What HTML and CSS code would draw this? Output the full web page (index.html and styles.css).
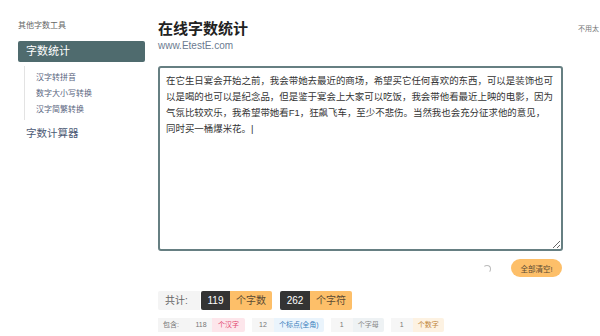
FILE: index.html
```html
<!DOCTYPE html>
<html>
<head>
    <meta charset="utf-8">
    <title>在线字数统计</title>
    <link rel="stylesheet" href="styles.css">
</head>
<body>
    <div class="page">
        <!-- left menu -->
        <div class="side">
            <div class="side-title">其他字数工具</div>
            <div class="side-active">字数统计</div>
            <ul class="side-sub">
                <li>汉字转拼音</li>
                <li>数字大小写转换</li>
                <li>汉字简繁转换</li>
            </ul>
            <div class="side-item">字数计算器</div>
        </div>

        <!-- main tool -->
        <div class="main">
            <h1 class="title">在线字数统计</h1>
            <div class="site">www.EtestE.com</div>
            <textarea class="box" spellcheck="false">在它生日宴会开始之前，我会带她去最近的商场，希望买它任何喜欢的东西，可以是装饰也可以是喝的也可以是纪念品，但是鉴于宴会上大家可以吃饭，我会带他看最近上映的电影，因为气氛比较欢乐，我希望带她看F1，狂飙飞车，至少不悲伤。当然我也会充分征求他的意见，
同时买一桶爆米花。|</textarea>
            <div class="actions">
                <span class="spin"></span>
                <button class="clear">全部清空!</button>
            </div>
            <div class="total">
                <span class="lbl">共计:</span>
                <span class="num">119</span><span class="unit">个字数</span>
                <span class="num gap">262</span><span class="unit">个字符</span>
            </div>
            <div class="detail">
                <span class="lbl2">包含:</span><span class="n">118</span><span class="t red">个汉字</span>
                <span class="n sp">12</span><span class="t blue">个标点(全角)</span>
                <span class="n sp">1</span><span class="t grey">个字母</span>
                <span class="n sp">1</span><span class="t orange">个数字</span>
            </div>
        </div>

        <div class="right">不用太</div>
    </div>
</body>
</html>
```
FILE: styles.css
```css
body {
    margin: 0;
    overflow: hidden;
    font-family: "Liberation Sans", "Noto Sans CJK SC", sans-serif;
    color: #333;
    background: #fff;
}
.page {
    display: flex;
    width: 600px;
}
.side {
    width: 127px;
    margin-left: 18px;
    padding-top: 21px;
    flex-shrink: 0;
}
.side-title {
    font-size: 8px;
    line-height: 10px;
    color: #666;
}
.side-active {
    margin-top: 10px;
    height: 21px;
    line-height: 21px;
    padding-left: 8px;
    background-color: #4f6b6e;
    color: #fff;
    font-size: 11px;
    border-radius: 2px;
}
.side-sub {
    list-style: none;
    margin: 4px 0 0 6px;
    padding: 4px 0 2px 11px;
    border-left: 1px solid #e3e3e3;
}
.side-sub li {
    font-size: 8px;
    line-height: 16px;
    color: #5a6580;
}
.side-item {
    margin-top: 6px;
    padding-left: 8px;
    font-size: 10.5px;
    line-height: 14px;
    color: #4d5a75;
}
.main {
    width: 405px;
    margin-left: 13px;
    flex-shrink: 0;
}
.title {
    margin: 20px 0 0 0;
    font-size: 15px;
    line-height: 18px;
    font-weight: bold;
    color: #222;
}
.site {
    margin-top: 1px;
    font-size: 10px;
    line-height: 13px;
    color: #6b7a90;
}
.box {
    display: block;
    box-sizing: border-box;
    margin-top: 14px;
    width: 405px;
    height: 185px;
    padding: 5px 5px 5px 6px;
    border: 2px solid #667f82;
    border-radius: 3px;
    font-family: "Liberation Sans", "Noto Sans CJK SC", sans-serif;
    font-size: 9.45px;
    line-height: 16px;
    color: #333;
    resize: vertical;
    outline: none;
}
.actions {
    display: flex;
    justify-content: flex-end;
    align-items: center;
    margin-top: 8px;
    padding-right: 1px;
}
.spin {
    width: 6px;
    height: 6px;
    border: 1px solid transparent;
    border-top-color: #bbb;
    border-right-color: #bbb;
    border-radius: 50%;
    margin-right: 20px;
    margin-top: 1px;
}
.clear {
    width: 51px;
    height: 18px;
    border: none;
    border-radius: 9px;
    background-color: #fdbf69;
    color: #5a4a33;
    font-family: "Liberation Sans", "Noto Sans CJK SC", sans-serif;
    font-size: 7.5px;
    padding: 0;
}
.total {
    display: flex;
    margin-top: 14px;
    height: 19px;
    font-size: 10px;
    line-height: 19px;
}
.total .lbl {
    width: 42px;
    padding-left: 7px;
    box-sizing: border-box;
    background-color: #f4f4f4;
    color: #666;
    border-radius: 2px 0 0 2px;
}
.total .num {
    width: 29px;
    text-align: center;
    background-color: #343434;
    color: #fff;
    margin-left: 1px;
    border-radius: 2px 0 0 2px;
}
.total .num.gap {
    width: 30px;
    margin-left: 8px;
}
.total .unit {
    width: 42px;
    text-align: center;
    background-color: #fdbf69;
    color: #5a4a33;
    border-radius: 0 2px 2px 0;
}
.detail {
    display: flex;
    margin-top: 8px;
    height: 14px;
    font-size: 7px;
    line-height: 14px;
}
.lbl2 {
    width: 32px;
    padding-left: 5px;
    box-sizing: border-box;
    background-color: #f4f4f4;
    color: #777;
}
.n {
    width: 22px;
    text-align: center;
    background-color: #f6f6f6;
    color: #777;
}
.n.sp {
    margin-left: 7px;
}
.t {
    padding: 0 5px;
    border-radius: 0 2px 2px 0;
}
.red {
    width: 33px;
    box-sizing: border-box;
    text-align: center;
    background-color: #fde6eb;
    color: #e2486f;
}
.blue {
    background-color: #eaf4fc;
    color: #3a7fbd;
}
.grey {
    background-color: #eef2f4;
    color: #888;
}
.orange {
    background-color: #fdf2e2;
    color: #c0853a;
}
.right {
    margin-left: 15px;
    padding-top: 23px;
    font-size: 7px;
    color: #777;
    white-space: nowrap;
}
```
